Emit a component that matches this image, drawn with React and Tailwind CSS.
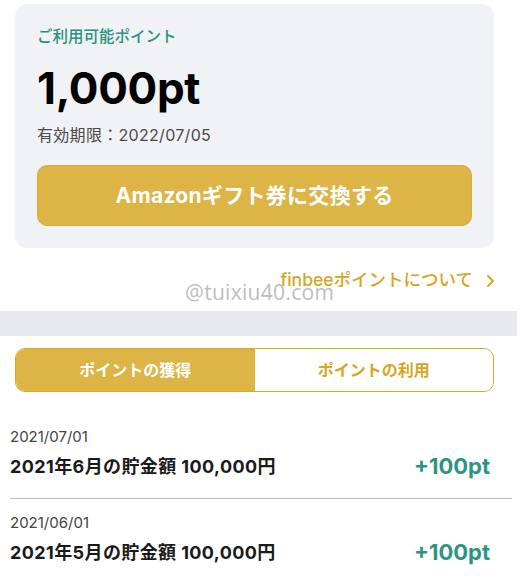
export default function App() {
  const font = { fontFamily: '"Inter", "Noto Sans CJK JP", sans-serif' };
  const rows = [
    { date: "2021/07/01", title: "2021年6月の貯金額 100,000円", amt: "+100pt" },
    { date: "2021/06/01", title: "2021年5月の貯金額 100,000円", amt: "+100pt" },
  ];
  return (
    <div className="w-[517px] h-[581px] bg-white overflow-hidden relative" style={font}>
      <div className="pt-[4px] pl-[15px]">
        <div className="w-[479px] h-[244px] rounded-[12px] bg-[#f1f2f6] px-[22px] flex flex-col">
          <div className="h-[24px] mt-[21px] flex items-center text-[15.5px] font-medium text-[#2a9080]">ご利用可能ポイント</div>
          <div className="h-[50px] mt-[14px] flex items-center text-[44px] font-bold text-black tracking-[-0.3px]">1,000pt</div>
          <div className="h-[22px] mt-[11px] flex items-center text-[16px] text-[#4a4a4a] tracking-[0.3px]">有効期限：2022/07/05</div>
          <div className="h-[61px] mt-[19px] rounded-[10px] bg-[#dcb546] border border-[#d6ad37] flex items-center justify-center text-white text-[21px] font-bold tracking-[0.3px]">
            Amazonギフト券に交換する
          </div>
        </div>
      </div>
      <div className="w-[517px] h-[63px] flex items-center justify-end pr-[22px] pt-[2px] text-[17.5px] font-medium text-[#d5a622]">
        <span>finbeeポイントについて</span>
        <svg width="10" height="14" viewBox="0 0 10 14" className="ml-[12px]" fill="none" stroke="#d5a622" strokeWidth="1.8" strokeLinecap="round" strokeLinejoin="round">
          <path d="M3 2l5 5-5 5" />
        </svg>
      </div>
      <div className="absolute left-[185px] top-[277px] text-[21px] text-[#b4b4b4]/90 tracking-[0.3px]" style={{ fontFamily: '"Open Sans", sans-serif' }}>@tuixiu40.com</div>
      <div className="h-[25px] bg-[#e8e9ed]"></div>
      <div className="pl-[15px] pt-[12px]">
        <div className="w-[479px] h-[44px] rounded-[10px] border border-[#d9a91e] flex overflow-hidden">
          <div className="w-1/2 bg-[#dcb546] flex items-center justify-center text-white text-[16px] font-bold">ポイントの獲得</div>
          <div className="w-1/2 bg-white flex items-center justify-center text-[#d5a622] text-[16px] font-bold">ポイントの利用</div>
        </div>
      </div>
      <div className="mt-[35px] pl-[10px] w-[512px]">
        {rows.map((r, i) => (
          <div key={i} className={i > 0 ? "border-t border-[#b8bbc0] pt-[14px]" : ""}>
            <div className="h-[20px] flex items-center text-[15px] text-[#444]">{r.date}</div>
            <div className="h-[38px] flex items-center justify-between">
              <span className="text-[18px] font-bold text-[#1a1a1a] tracking-[0.4px]">{r.title}</span>
              <span className="text-[22px] font-bold text-[#2e9482] pr-[22px]">{r.amt}</span>
            </div>
            {i === 0 && <div className="h-[13px]"></div>}
          </div>
        ))}
      </div>
    </div>
  );
}
